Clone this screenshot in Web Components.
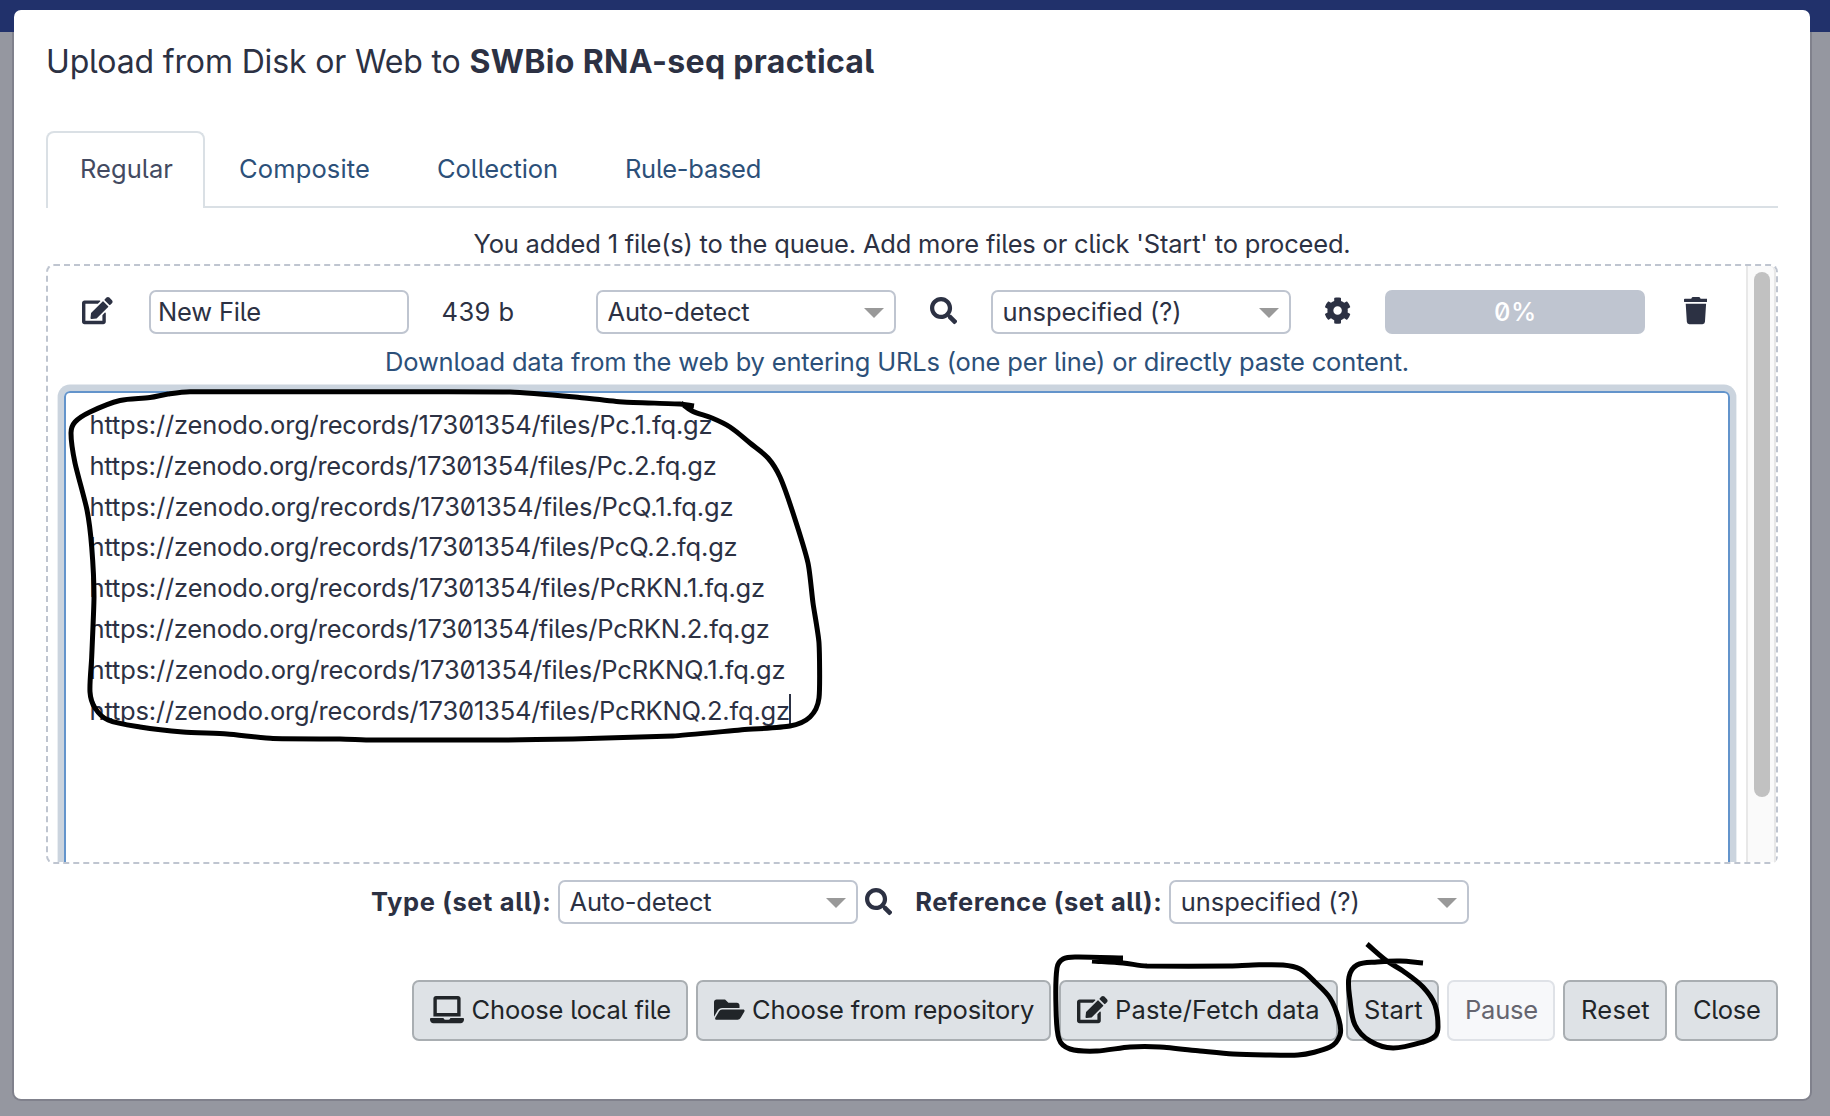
<!DOCTYPE html>
<html lang="en">
<head>
<meta charset="utf-8">
<title>Upload from Disk or Web</title>
<style>
html,body{margin:0;height:100%;overflow:hidden}
body{background:linear-gradient(#21316b 0 32px,#9597a0 32px);font:430 25.5px/40px Inter,"Liberation Sans",sans-serif;color:#2c3143;font-feature-settings:"zero","cv05"}
</style>
</head>
<body>
<upload-dialog></upload-dialog>
<script>
const define=(name,html,setup)=>customElements.define(name,class extends HTMLElement{
  connectedCallback(){
    if(this.shadowRoot)return;
    this.attachShadow({mode:'open'}).innerHTML=html;
    if(setup)setup(this,this.shadowRoot);
  }
});

// Text run tracked so that it fills the width given in its "w" attribute.
define('fit-text',`<style>:host{display:inline-block;white-space:pre;flex:none;text-align:left}</style><span><slot></slot></span>`,(el,root)=>{
  const span=root.querySelector('span'),w=+el.getAttribute('w');
  const n=el.textContent.length;
  el.style.width=w+'px';
  span.style.letterSpacing=((w-span.getBoundingClientRect().width)/n)+'px';
});

const ICONS={
edit:[576,'M402.6 83.2l90.2 90.2c3.8 3.8 3.8 10 0 13.8L274.4 405.6l-92.8 10.3c-12.4 1.4-22.9-9.1-21.5-21.5l10.3-92.8L388.8 83.2c3.8-3.8 10-3.8 13.8 0zm162-22.9l-48.8-48.8c-15.2-15.2-39.9-15.2-55.2 0l-35.4 35.4c-3.8 3.8-3.8 10 0 13.8l90.2 90.2c3.8 3.8 10 3.8 13.8 0l35.4-35.4c15.2-15.3 15.2-40 0-55.2zM384 346.2V448H64V128h229.8c3.2 0 6.2-1.3 8.5-3.5l40-40c7.6-7.6 2.2-20.5-8.5-20.5H48C21.5 64 0 85.5 0 112v352c0 26.5 21.5 48 48 48h352c26.5 0 48-21.5 48-48V306.2c0-10.7-12.9-16-20.5-8.5l-40 40c-2.2 2.3-3.5 5.3-3.5 8.5z'],
search:[512,'M505 442.7L405.3 343c-4.5-4.5-10.6-7-17-7H372c27.6-35.3 44-79.7 44-128C416 93.1 322.9 0 208 0S0 93.1 0 208s93.1 208 208 208c48.3 0 92.7-16.4 128-44v16.3c0 6.4 2.5 12.5 7 17l99.7 99.7c9.4 9.4 24.6 9.4 33.9 0l28.3-28.3c9.4-9.4 9.4-24.6.1-34zM208 336c-70.7 0-128-57.2-128-128 0-70.7 57.2-128 128-128 70.7 0 128 57.2 128 128 0 70.7-57.2 128-128 128z'],
cog:[512,'M487.4 315.7l-42.6-24.6c4.3-23.2 4.3-47 0-70.2l42.6-24.6c4.9-2.8 7.1-8.6 5.5-14-11.1-35.6-30-67.8-54.7-94.6-3.8-4.1-10-5.1-14.8-2.3L380.8 110c-17.9-15.4-38.5-27.3-60.8-35.1V25.8c0-5.6-3.9-10.5-9.4-11.7-36.7-8.2-74.3-7.8-109.2 0-5.5 1.2-9.4 6.1-9.4 11.7V75c-22.2 7.9-42.8 19.8-60.8 35.1L88.7 85.5c-4.9-2.8-11-1.9-14.8 2.3-24.7 26.7-43.6 58.9-54.7 94.6-1.7 5.4.6 11.2 5.5 14L67.3 221c-4.3 23.2-4.3 47 0 70.2l-42.6 24.6c-4.9 2.8-7.1 8.6-5.5 14 11.1 35.6 30 67.8 54.7 94.6 3.8 4.1 10 5.1 14.8 2.3l42.6-24.6c17.9 15.4 38.5 27.3 60.8 35.1v49.2c0 5.6 3.9 10.5 9.4 11.7 36.7 8.2 74.3 7.8 109.2 0 5.5-1.2 9.4-6.1 9.4-11.7v-49.2c22.2-7.9 42.8-19.8 60.8-35.1l42.6 24.6c4.9 2.8 11 1.9 14.8-2.3 24.7-26.7 43.6-58.9 54.7-94.6 1.5-5.5-.7-11.3-5.6-14.1zM256 336c-44.1 0-80-35.9-80-80s35.9-80 80-80 80 35.9 80 80-35.9 80-80 80z'],
trash:[448,'M432 32H312l-9.4-18.7A24 24 0 0 0 281.1 0H166.8a23.72 23.72 0 0 0-21.4 13.3L136 32H16A16 16 0 0 0 0 48v32a16 16 0 0 0 16 16h416a16 16 0 0 0 16-16V48a16 16 0 0 0-16-16zM53.2 467a48 48 0 0 0 47.9 45h245.8a48 48 0 0 0 47.9-45L416 128H32z'],
laptop:[640,'M624 416H381.54c-.74 19.81-14.71 32-32.74 32H288c-18.69 0-33.02-17.47-32.77-32H16c-8.8 0-16 7.2-16 16v16c0 35.2 28.8 64 64 64h512c35.2 0 64-28.8 64-64v-16c0-8.8-7.2-16-16-16zM576 48c0-26.4-21.6-48-48-48H112C85.6 0 64 21.6 64 48v336h512V48zm-64 272H128V64h384v256z'],
folder:[576,'M572.694 292.093L500.27 416.248A63.997 63.997 0 0 1 444.989 448H45.025c-18.523 0-30.064-20.093-20.731-36.093l72.424-124.155A64 64 0 0 1 152 256h399.964c18.523 0 30.064 20.093 20.73 36.093zM152 224h328v-48c0-26.51-21.49-48-48-48H272l-64-64H48C21.49 64 0 85.49 0 112v278.046l69.077-118.418C86.214 242.25 117.989 224 152 224z']
};
define('ui-icon',`<style>:host{display:block;flex:none;height:27.2px}svg{display:block;fill:currentColor}</style>`,(el,root)=>{
  const [w,d]=ICONS[el.getAttribute('name')];
  root.innerHTML+=`<svg viewBox="0 0 ${w} 512" width="${w*27.2/512}" height="27.2"><path d="${d}"/></svg>`;
});

define('ui-select',`<style>
:host{box-sizing:border-box;display:flex;align-items:center;justify-content:space-between;width:300px;height:44px;border:2px solid #bfc5d0;border-radius:7px;background:#fff;padding:0 10px 0 9.5px;flex:none}
i{border:10px solid transparent;border-top-color:#999;border-bottom:0;margin-top:1px}
</style><slot></slot><i></i>`);

define('ui-button',`<style>
:host{box-sizing:border-box;display:flex;align-items:center;height:61px;border:2px solid #a9aeb2;border-radius:7px;background:#dee2e6;color:#212529;padding:0 0 1px 16px;gap:7.5px;flex:none}
:host([disabled]){background:#f7f8fa;border-color:#dfe2e7;color:#65656f}
</style><slot name="icon"></slot><slot></slot>`,el=>{el.style.width=el.getAttribute('width')+'px'});

define('ui-tab',`<style>
:host{box-sizing:border-box;display:flex;align-items:center;height:77px;padding:0 0 3px 32px;color:#2c5079;border:2px solid transparent;border-bottom:0;flex:none;margin-bottom:-2px}
:host([active]){color:#434a61;border-color:#dae0e5;background:#fff;border-radius:8px 8px 0 0}
</style><slot></slot>`,el=>{el.style.width=el.getAttribute('width')+'px'});

define('upload-tabs',`<style>:host{display:flex;border-bottom:2px solid #dae0e5;height:75px;margin-top:40px}</style>
<ui-tab active width="159"><fit-text w="93">Regular</fit-text></ui-tab>
<ui-tab width="198"><fit-text w="131">Composite</fit-text></ui-tab>
<ui-tab width="188"><fit-text w="121">Collection</fit-text></ui-tab>
<ui-tab width="201"><fit-text w="136">Rule-based</fit-text></ui-tab>`);

define('scroll-bar',`<style>:host{box-sizing:border-box;display:block;width:30px;background:#fafafa;border:2px solid #e8e8e8;border-width:0 2px;padding:6px 4px 0 6px;border-top-right-radius:6px}
div{width:16px;height:525px;border-radius:8px;background:#c1c1c1}</style><div></div>`);

define('url-box',`<style>
:host{box-sizing:border-box;display:block;margin:9px 16px 0;height:520px;border:2px solid #6394cb;border-radius:6px;box-shadow:0 0 0 6.4px #cbd4de;padding:12px 23.5px;line-height:40.8px}
div{display:flex;align-items:center;height:40.8px}
i{width:2px;height:30px;background:#2c3143;margin:-3px 0 0 -1px}
</style>`,(el,root)=>{
  const rows=[['Pc.1',623],['Pc.2',627],['PcQ.1',644],['PcQ.2',648],['PcRKN.1',675.5],['PcRKN.2',680],['PcRKNQ.1',696],['PcRKNQ.2',700.5]];
  root.innerHTML+=rows.map(([n,w],i)=>`<div><fit-text w="${w}">https://zenodo.org/records/17301354/files/${n}.fq.gz</fit-text>${i==7?'<i></i>':''}</div>`).join('');
});

define('upload-row',`<style>
:host{display:grid;grid-template-columns:67px 260px 187px 300px 95px 300px 94px 260px 101px;padding:24px 0 0 34px;align-items:center;height:44px}
ui-icon{margin-bottom:2px}
.input{box-sizing:border-box;height:44px;border:2px solid #bfc5d0;border-radius:7px;padding-left:7px;display:flex;align-items:center}
.size{padding-left:32.5px}.c{justify-self:center}
.bar{height:44px;border-radius:7px;background:#bfc5d0;color:#fff;display:flex;align-items:center;justify-content:center;font-weight:500;padding-left:1px;box-sizing:border-box}
</style>
<ui-icon name="edit"></ui-icon>
<div class="input"><fit-text w="103">New File</fit-text></div>
<div class="size"><fit-text w="73">439 b</fit-text></div>
<ui-select><fit-text w="142">Auto-detect</fit-text></ui-select>
<ui-icon class="c" name="search"></ui-icon>
<ui-select><fit-text w="179">unspecified (?)</fit-text></ui-select>
<ui-icon class="c" name="cog"></ui-icon>
<div class="bar"><fit-text w="43">0%</fit-text></div>
<ui-icon class="c" name="trash"></ui-icon>`);

define('upload-queue',`<style>
:host{box-sizing:border-box;display:flex;height:600px;border:2px dashed #bfc5d0;border-radius:8px}
main{width:1698px;overflow:hidden}
.hint{text-align:center;color:#2c5079;margin-top:8px;height:40px}
</style>
<main><upload-row></upload-row>
<div class="hint"><fit-text w="1024">Download data from the web by entering URLs (one per line) or directly paste content.</fit-text></div>
<url-box></url-box></main><scroll-bar></scroll-bar>`);

define('set-all',`<style>
:host{display:flex;align-items:center;height:44px;margin-top:16px;padding-left:325px}
b{font-weight:750;flex:none}
</style>
<b style="width:187px"><fit-text w="180.5">Type (set all):</fit-text></b>
<ui-select><fit-text w="142">Auto-detect</fit-text></ui-select>
<ui-icon name="search" style="margin:0 23px 0 7px"></ui-icon>
<b style="width:254px"><fit-text w="247">Reference (set all):</fit-text></b>
<ui-select><fit-text w="179">unspecified (?)</fit-text></ui-select>`);

define('upload-actions',`<style>:host{display:flex;justify-content:flex-end;gap:8px;margin-top:56px}</style>
<ui-button width="276"><ui-icon slot="icon" name="laptop"></ui-icon><fit-text w="199.5">Choose local file</fit-text></ui-button>
<ui-button width="355"><ui-icon slot="icon" name="folder"></ui-icon><fit-text w="282">Choose from repository</fit-text></ui-button>
<ui-button width="279"><ui-icon slot="icon" name="edit"></ui-icon><fit-text w="204.5">Paste/Fetch data</fit-text></ui-button>
<ui-button width="93"><fit-text w="59">Start</fit-text></ui-button>
<ui-button width="108" disabled><fit-text w="73">Pause</fit-text></ui-button>
<ui-button width="104"><fit-text w="69">Reset</fit-text></ui-button>
<ui-button width="103"><fit-text w="67.5">Close</fit-text></ui-button>`);

// Freehand pen strokes, smoothed through their sample points.
const STROKES=[
'694,406 680,404 623,402 575,397 510,392 440,391.7 190,391.7 168,394 150,397.5 120,400.5 90,412 75,422 71,433 75,463 87,510 91.7,547 94,597 91.7,657 90,692 95,708 108,720 140,727 183,732 227,734 273,738.5 340,739 373,740 500,740 573,739 673,736 740,730 790,726 810,717 819,698 819,643 813,603 808,563 793,513 780,477 768,458 750,443 730,427 712,418 692,411 681,403',
'1092,961 1123,963 1147,966 1230,966 1253,965 1283,965 1300,969 1315,982 1330,998 1339,1020 1340,1035 1330,1047 1298,1055 1233,1054 1200,1051 1160,1047 1130,1047 1097,1051 1070,1049 1059,1039 1056,1007 1057,968 1063,959 1077,957 1123,958',
'1367,944 1387,961 1403,971 1423,987 1435,1005 1438,1027 1435,1036 1423,1042 1393,1048 1370,1041 1355,1025 1350,1000 1349,977 1357,965 1377,962 1400,961 1423,963'];
define('pen-layer',`<style>:host{position:absolute;left:0;top:0;pointer-events:none}svg{display:block;fill:none;stroke:#000;stroke-width:5;stroke-linejoin:round}</style>`,(el,root)=>{
  const path=s=>{
    const p=s.split(' ').map(a=>a.split(',').map(Number));
    const tangent=i=>{
      const a=p[i-1]||p[i],b=p[i+1]||p[i],l=Math.hypot(b[0]-a[0],b[1]-a[1]);
      return [(b[0]-a[0])/l,(b[1]-a[1])/l];
    };
    let d='M'+p[0];
    for(let i=0;i<p.length-1;i++){
      const q=p[i],r=p[i+1],l=Math.hypot(r[0]-q[0],r[1]-q[1])/3,t=tangent(i),u=tangent(i+1);
      const k=Math.min(l,9);
      d+=`C${q[0]+t[0]*k} ${q[1]+t[1]*k} ${r[0]-u[0]*k} ${r[1]-u[1]*k} ${r}`;
    }
    return `<path d="${d}"/>`;
  };
  root.innerHTML+=`<svg width="1830" height="1116" viewBox="0 0 1830 1116">${STROKES.map(path).join('')}</svg>`;
});

define('upload-dialog',`<style>
:host{display:block;padding:8px 18px 0 12px}
section{box-sizing:border-box;height:1093px;border:2px solid transparent;background:linear-gradient(#fff,#fff) padding-box,linear-gradient(#21316b 0 24px,#80818c 24px) border-box;border-radius:9px;padding:22px 32px 0}
h1{margin:0;font-size:32px;font-weight:430;line-height:60px;height:60px;display:flex}
b{font-weight:750}
.note{margin-top:16px;height:40px;text-align:center}
upload-tabs{margin-top:39px}
</style>
<section>
<h1><fit-text w="423.5">Upload from Disk or Web to </fit-text><b><fit-text w="405">SWBio RNA-seq practical</fit-text></b></h1>
<upload-tabs></upload-tabs>
<div class="note"><fit-text w="877">You added 1 file(s) to the queue. Add more files or click 'Start' to proceed.</fit-text></div>
<upload-queue></upload-queue>
<set-all></set-all>
<upload-actions></upload-actions>
</section>
<pen-layer></pen-layer>`);
</script>
</body>
</html>
